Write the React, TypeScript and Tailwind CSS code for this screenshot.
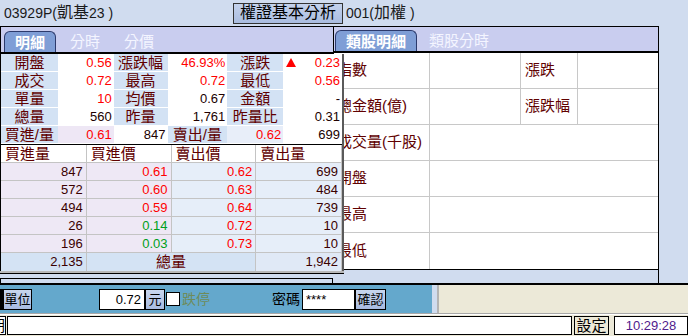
import React from "react";

const FONT = "font-['Liberation_Sans','Noto_Sans_CJK_TC',sans-serif]";

type Cell = { t: string; kind: "label" | "val"; color?: string; bg?: string; tri?: boolean };

const upperRows: Cell[][] = [
  [
    { t: "開盤", kind: "label" },
    { t: "0.56", kind: "val", color: "text-[#ff0000]" },
    { t: "漲跌幅", kind: "label" },
    { t: "46.93%", kind: "val", color: "text-[#ff0000]" },
    { t: "漲跌", kind: "label" },
    { t: "0.23", kind: "val", color: "text-[#ff0000]", tri: true },
  ],
  [
    { t: "成交", kind: "label" },
    { t: "0.72", kind: "val", color: "text-[#ff0000]" },
    { t: "最高", kind: "label" },
    { t: "0.72", kind: "val", color: "text-[#ff0000]" },
    { t: "最低", kind: "label" },
    { t: "0.56", kind: "val", color: "text-[#ff0000]" },
  ],
  [
    { t: "單量", kind: "label" },
    { t: "10", kind: "val", color: "text-[#ff0000]" },
    { t: "均價", kind: "label" },
    { t: "0.67", kind: "val" },
    { t: "金額", kind: "label" },
    { t: "-", kind: "val" },
  ],
  [
    { t: "總量", kind: "label" },
    { t: "560", kind: "val" },
    { t: "昨量", kind: "label" },
    { t: "1,761", kind: "val" },
    { t: "昨量比", kind: "label" },
    { t: "0.31", kind: "val" },
  ],
  [
    { t: "買進/量", kind: "label" },
    { t: "0.61", kind: "val", color: "text-[#ff0000]", bg: "bg-[#eee7f5]" },
    { t: "847", kind: "val" },
    { t: "賣出/量", kind: "label" },
    { t: "0.62", kind: "val", color: "text-[#ff0000]", bg: "bg-[#e8eef9]" },
    { t: "699", kind: "val" },
  ],
];

const colW = ["w-[57px]", "w-[56px]", "w-[54px]", "w-[60px]", "w-[56px]", "w-[59px]"];

const book = [
  ["847", "0.61", "0.62", "699", "r"],
  ["572", "0.60", "0.63", "484", "r"],
  ["494", "0.59", "0.64", "739", "r"],
  ["26", "0.14", "0.72", "10", "g"],
  ["196", "0.03", "0.73", "10", "g"],
];

const rightRows = ["指數", "總金額(億)", "成交量(千股)", "開盤", "最高", "最低"];

function Tab({ label, active }: { label: string; active?: boolean }) {
  if (active) {
    return (
      <div className="h-[21px] px-[10px] flex items-center rounded-t-[6px] border border-b-0 border-[#2c3a6c] bg-[#7f9ed6] text-white font-bold text-[15px] leading-none whitespace-nowrap">
        {label}
      </div>
    );
  }
  return <div className="h-[21px] px-[12px] flex items-center text-[#f4f5ff] text-[15px] leading-none whitespace-nowrap">{label}</div>;
}

function UpperGrid() {
  return (
    <div className="flex flex-col">
      {upperRows.map((row, i) => (
        <div key={i} className="flex h-[18px]">
          {row.map((c, j) => {
            const isLabel = c.kind === "label";
            const bg = c.bg ?? (isLabel ? "bg-[#d3e2f4]" : "bg-white");
            return (
              <div
                key={j}
                className={`${colW[j]} ${bg} h-[18px] border-b border-white flex items-center ${
                  isLabel ? "justify-center text-[15px] text-[#600000]" : "justify-end pr-[2px] text-[13px] " + (c.color ?? "text-[#200000]")
                } leading-none whitespace-nowrap`}
              >
                {c.tri && (
                  <svg className="mr-auto ml-[3px]" width="10" height="9" viewBox="0 0 10 9">
                    <polygon points="5,0 10,9 0,9" fill="#ff0000" />
                  </svg>
                )}
                {c.t}
              </div>
            );
          })}
        </div>
      ))}
    </div>
  );
}

function LowerTable() {
  const w = ["w-[86px]", "w-[85px]", "w-[85px]", "w-[86px]"];
  return (
    <div className="flex flex-col">
      <div className="flex h-[18px] bg-white">
        {["買進量", "買進價", "賣出價", "賣出量"].map((h, i) => (
          <div key={h} className={`${w[i]} h-[18px] border-r border-b border-[#c4c4c4] pl-[4px] text-[15px] leading-[18px] text-[#600000]`}>
            {h}
          </div>
        ))}
      </div>
      {book.map((r, i) => (
        <div key={i} className="flex h-[18px]">
          <div className={`${w[0]} bg-[#eee8f5] border-r border-b border-[#c4c4c4] text-right pr-[3px] text-[13px] leading-[18px] text-[#3a0000]`}>{r[0]}</div>
          <div className={`${w[1]} bg-[#eee8f5] border-r border-b border-[#c4c4c4] text-right pr-[3px] text-[13px] leading-[18px] ${r[4] === "g" ? "text-[#00a020]" : "text-[#ff0000]"}`}>{r[1]}</div>
          <div className={`${w[2]} bg-[#e6eef9] border-r border-b border-[#c4c4c4] text-right pr-[3px] text-[13px] leading-[18px] text-[#ff0000]`}>{r[2]}</div>
          <div className={`${w[3]} bg-[#e6eef9] border-r border-b border-[#c4c4c4] text-right pr-[3px] text-[13px] leading-[18px] text-[#3a0000]`}>{r[3]}</div>
        </div>
      ))}
      <div className="flex h-[18px]">
        <div className="w-[86px] bg-[#d4e3f4] border-r border-[#c4c4c4] text-right pr-[3px] text-[13px] leading-[18px] text-[#3a0000]">2,135</div>
        <div className="w-[170px] bg-[#d4e3f4] border-r border-[#c4c4c4] text-center text-[15px] leading-[18px] text-[#600000]">總量</div>
        <div className="w-[86px] bg-[#e0e9f6] border-r border-[#c4c4c4] text-right pr-[3px] text-[13px] leading-[18px] text-[#3a0000]">1,942</div>
      </div>
    </div>
  );
}

function Btn({ label, w }: { label: string; w: string }) {
  return (
    <div className={`${w} h-[21px] flex items-center justify-center bg-gradient-to-b from-[#c8d6ee] to-[#a8bbe0] border border-black text-[13px] leading-none text-black whitespace-nowrap`}>
      {label}
    </div>
  );
}

export default function App() {
  return (
    <div className={`w-[688px] h-[336px] overflow-hidden bg-[#d0dcef] ${FONT} flex flex-col`}>
      {/* top line */}
      <div className="h-[26px] flex items-center">
        <div className="ml-[4px] w-[229px] text-[14px] text-[#1a1a1a] whitespace-nowrap">
          03929P(<span className="text-[16px]">凱基</span>23 )
        </div>
        <div className="w-[110px] h-[21px] flex items-center justify-center bg-gradient-to-b from-[#c4d2ec] to-[#aabde0] border border-[#333] text-[16px] text-black leading-none whitespace-nowrap">
          權證基本分析
        </div>
        <div className="ml-[3px] text-[14px] text-[#1a1a1a] whitespace-nowrap">
          001(<span className="text-[16px]">加權</span> )
        </div>
      </div>

      {/* windows */}
      <div className="relative h-[257px]">
        {/* right window */}
        <div className="absolute left-[333px] top-0 w-[326px] h-[257px] border-t border-r border-black flex flex-col">
          <div className="h-[26px] bg-[#c9cdef] border-b-2 border-black flex items-end pl-[2px]">
            <Tab label="類股明細" active />
            <Tab label="類股分時" />
          </div>
          <div className="bg-white border-b border-black">
            {rightRows.map((r, i) => (
              <div key={r} className="flex h-[36px] border-b border-[#c8c8c8] last:border-b-0">
                <div className="w-[97px] border-r border-[#c8c8c8] pl-[4px] flex items-center text-[15px] text-[#600000] whitespace-nowrap">{r}</div>
                {i < 2 ? (
                  <>
                    <div className="w-[91px] border-r border-[#c8c8c8]" />
                    <div className="w-[57px] border-r border-[#c8c8c8] pl-[4px] flex items-center text-[15px] text-[#600000]">
                      {i === 0 ? "漲跌" : "漲跌幅"}
                    </div>
                    <div className="flex-1" />
                  </>
                ) : (
                  <div className="flex-1" />
                )}
              </div>
            ))}
          </div>
        </div>

        {/* frame behind left window */}
        <div className="absolute left-0 top-[252px] w-[333px] h-[5px] border-t border-l border-r border-black" />

        {/* left window */}
        <div className="absolute left-0 top-0 w-[344px] h-[248px] flex flex-col">
          <div className="w-[334px] h-[28px] bg-[#c9cdef] border-t border-l border-r border-black border-b-2 flex items-end pl-[3px]">
            <Tab label="明細" active />
            <div className="w-[2px]" />
            <Tab label="分時" />
            <Tab label="分價" />
          </div>
          <div className="w-[344px] border-l border-r-2 border-black border-r-[#5a5a5a]">
            <UpperGrid />
            <div className="h-px bg-black" />
            <LowerTable />
          </div>
          <div className="w-[344px] h-[2px] bg-[#b8b8b8]" />
          <div className="w-[344px] h-px bg-black" />
        </div>
      </div>

      <div className="h-[2px] bg-black" />

      {/* order bar */}
      <div className="h-[28px] flex">
        <div className="w-[432px] bg-[#64a8cc] flex items-center">
          <div className="w-[3px] h-[21px] bg-black" />
          <Btn label="單位" w="w-[29px]" />
          <div className="ml-[67px] w-[46px] h-[21px] bg-white border border-black text-right pr-[3px] text-[13px] leading-[19px] text-black">0.72</div>
          <Btn label="元" w="w-[20px]" />
          <div className="ml-[1px] w-[14px] h-[14px] bg-white border border-black" />
          <div className="ml-[2px] text-[14px] text-[#6e8b5a] leading-none whitespace-nowrap">跌停</div>
          <div className="ml-[62px] text-[14px] text-black leading-none whitespace-nowrap">密碼</div>
          <div className="ml-[2px] w-[53px] h-[21px] bg-white border border-black pl-[3px] text-[13px] leading-[19px] text-black">****</div>
          <Btn label="確認" w="w-[31px]" />
        </div>
        <div className="w-[5px] bg-[#d0dcef]" />
        <div className="w-[2px] bg-[#b4b4b4]" />
        <div className="flex-1 bg-[#ece9d8]" />
      </div>

      {/* status bar */}
      <div className="h-[23px] bg-[#ece9d8] border-t border-[#a8a8a8] flex flex-col">
        <div className="h-px bg-white" />
        <div className="flex items-center h-[20px] pt-[1px]">
          <div className="w-[6px] h-[19px] overflow-hidden border-y border-r border-black flex justify-end bg-white">
            <span className="text-[15px] leading-[17px] text-black">期</span>
          </div>
          <div className="ml-[1px] w-[565px] h-[19px] bg-white border border-black" />
          <div className="ml-[2px] w-[35px] h-[19px] border border-black flex items-center justify-center text-[15px] leading-none text-black whitespace-nowrap">設定</div>
          <div className="ml-[5px] w-[74px] h-[19px] border border-black bg-white flex items-center justify-center text-[13px] leading-none text-[#50208c]">
            10:29:28
          </div>
        </div>
      </div>
    </div>
  );
}
